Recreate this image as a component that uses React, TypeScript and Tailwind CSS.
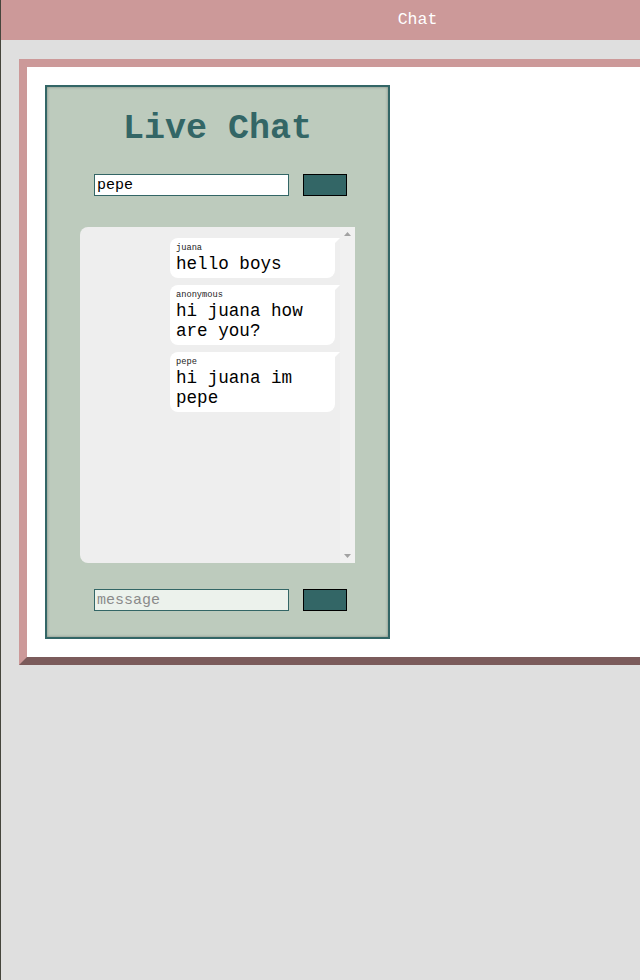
import React from 'react';

interface Message {
  user: string;
  text: string;
}

const messages: Message[] = [
  { user: 'juana', text: 'hello boys' },
  { user: 'anonymous', text: 'hi juana how are you?' },
  { user: 'pepe', text: 'hi juana im pepe' },
];

const mono = { fontFamily: '"Liberation Mono", "DejaVu Sans Mono", monospace' };

const Bubble: React.FC<{ msg: Message }> = ({ msg }) => (
  <div className="relative self-end mr-[5px] w-[165px] shrink-0 bg-white rounded-[8px] rounded-tr-none px-[6px] pt-[5px] pb-[4px]">
    <span className="absolute top-0 right-[-5px] w-0 h-0 border-t-[5px] border-t-white border-r-[5px] border-r-transparent" />
    <div className="text-[8.7px] leading-[11px] text-[#222]">{msg.user}</div>
    <div className="text-[17.6px] leading-[20px] text-black">{msg.text}</div>
  </div>
);

// fake classic scrollbar track (no thumb, content fits)
const ScrollTrack: React.FC = () => (
  <div className="w-[15px] shrink-0 bg-[#f1f1f1] flex flex-col justify-between items-center py-[5px]">
    <svg width="7" height="4" viewBox="0 0 7 4">
      <polygon points="3.5,0 7,4 0,4" fill="#a3a3a3" />
    </svg>
    <svg width="7" height="4" viewBox="0 0 7 4">
      <polygon points="0,0 7,0 3.5,4" fill="#a3a3a3" />
    </svg>
  </div>
);

const App: React.FC = () => {
  return (
    <div className="w-[640px] min-h-[980px] overflow-hidden bg-[#dfdfdf] border-l border-[#45453c]" style={mono}>
      <header className="w-[833px] h-10 bg-[#cc9999] flex items-center justify-center pt-[1px] text-white text-[16.5px]">
        Chat
      </header>

      <div className="mt-[19px] ml-[18px] w-[800px] border-[8px] border-solid border-t-[#cc9999] border-l-[#cc9999] border-b-[#7b5b5b] border-r-[#7b5b5b] bg-white p-[18px]">
        <div className="w-[345px] h-[554px] border-2 border-[#336666] bg-[#bdcbbd] shadow-[inset_0_0_3px_rgba(0,0,0,0.35)] flex flex-col items-center">
          <h1 className="mt-[22px] text-[35px] leading-[40px] font-bold text-[#336666]">Live Chat</h1>

          <div className="mt-[25px] flex gap-[14px] pl-[6px]">
            <input
              defaultValue="pepe"
              className="w-[195px] h-[22px] bg-white border border-[#336666] px-[2px] pt-[3px] text-[15px] text-black outline-none"
              style={mono}
            />
            <button className="w-[44px] h-[22px] bg-[#336666] border border-black" />
          </div>

          <div className="mt-[31px] w-[275px] h-[336px] shrink-0 bg-[#eeeeee] rounded-l-[8px] overflow-hidden flex">
            <div className="flex-1 pt-[11px] flex flex-col gap-[7px]">
              {messages.map((m, i) => (
                <Bubble key={i} msg={m} />
              ))}
            </div>
            <ScrollTrack />
          </div>

          <div className="mt-[26px] flex gap-[14px] pl-[6px]">
            <input
              autoFocus
              placeholder="message"
              className="w-[195px] h-[22px] bg-[#ecf2ec] border border-[#336666] px-[2px] pt-[3px] text-[15px] text-black placeholder:text-[#8a8a8a] outline-none"
              style={mono}
            />
            <button className="w-[44px] h-[22px] bg-[#336666] border border-black" />
          </div>
        </div>
      </div>
    </div>
  );
};

export default App;
